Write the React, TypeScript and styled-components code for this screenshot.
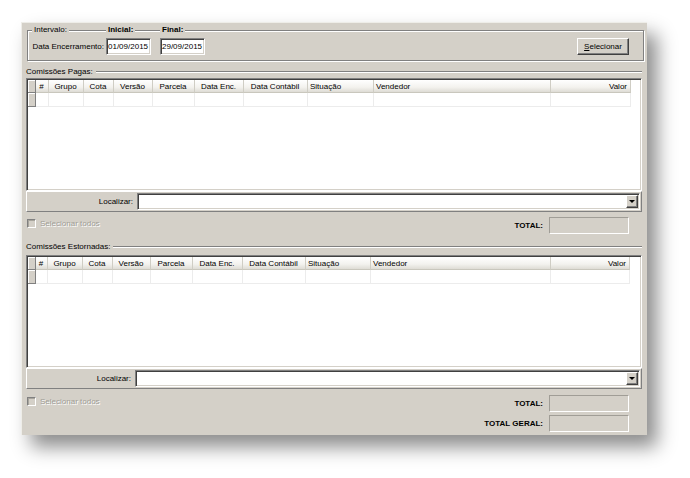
import { Fragment } from "react";
import styled, { createGlobalStyle } from "styled-components";

const GlobalStyle = createGlobalStyle`
  html, body {
    margin: 0;
    background: #fff;
  }
  body {
    font-family: "Liberation Sans", Arial, sans-serif;
    font-size: 8px;
    color: #000;
  }
`;

type Column = { label: string; w: number; align: "left" | "center" | "right" };

const paidColumns: Column[] = [
  { label: "#", w: 13, align: "center" },
  { label: "Grupo", w: 35, align: "center" },
  { label: "Cota", w: 30, align: "center" },
  { label: "Versão", w: 39, align: "center" },
  { label: "Parcela", w: 42, align: "center" },
  { label: "Data Enc.", w: 49, align: "center" },
  { label: "Data Contábil", w: 64, align: "center" },
  { label: "Situação", w: 66, align: "left" },
  { label: "Vendedor", w: 177, align: "left" },
  { label: "Valor", w: 80, align: "right" },
];

const reversedColumns: Column[] = [
  { label: "#", w: 12, align: "center" },
  { label: "Grupo", w: 35, align: "center" },
  { label: "Cota", w: 30, align: "center" },
  { label: "Versão", w: 38, align: "center" },
  { label: "Parcela", w: 42, align: "center" },
  { label: "Data Enc.", w: 50, align: "center" },
  { label: "Data Contábil", w: 63, align: "center" },
  { label: "Situação", w: 65, align: "left" },
  { label: "Vendedor", w: 180, align: "left" },
  { label: "Valor", w: 79, align: "right" },
];

const Page = styled.div`
  width: 690px;
  height: 478px;
  box-sizing: border-box;
  padding: 22px 0 0 21px;
`;

const Window = styled.div`
  width: 626px;
  height: 413px;
  box-sizing: border-box;
  padding: 0 5px;
  background: #d4d0c8;
  box-shadow: inset 1px 1px 0 #eeede8, 10px 12px 18px rgba(0, 0, 0, 0.45);
  display: flex;
  flex-direction: column;
`;

/* group box "Intervalo" */
const GroupBox = styled.div`
  margin: 8px -2px 0 1px;
  padding: 0 14px 5px 0;
  border: 1px solid #808080;
  box-shadow: inset 1px 1px 0 #fff, 1px 1px 0 #fff;
`;

const Caption = styled.div`
  display: flex;
  height: 10px;
  margin-top: -6px;
  padding-left: 4px;
`;

const CaptionSlot = styled.div<{ $w?: number }>`
  width: ${(p) => (p.$w ? `${p.$w}px` : "auto")};
  flex: none;
  display: flex;
`;

const CaptionText = styled.span<{ $bold?: boolean }>`
  background: #d4d0c8;
  padding: 0 2px;
  line-height: 10px;
  font-weight: ${(p) => (p.$bold ? 700 : 400)};
`;

const IntervalRow = styled.div`
  display: grid;
  grid-template-columns: 78px 54px 1fr auto;
  align-items: center;
  margin-top: 3px;
`;

const FieldLabel = styled.span`
  text-align: right;
  padding-right: 2px;
`;

const DateField = styled.input`
  width: 45px;
  height: 17px;
  box-sizing: border-box;
  margin: 0;
  padding: 0 0 0 1px;
  font: inherit;
  color: #000;
  background: #fff;
  border: 1px solid;
  border-color: #808080 #fff #fff #808080;
  box-shadow: inset 1px 1px 0 #404040, inset -1px -1px 0 #d4d0c8;
  outline: none;
`;

const Button = styled.button`
  width: 52px;
  height: 17px;
  margin: 0;
  padding: 0;
  font: inherit;
  color: #000;
  background: #d4d0c8;
  border: 1px solid;
  border-color: #fff #404040 #404040 #fff;
  box-shadow: inset -1px -1px 0 #808080;
`;

/* section with grid */
const SectionHeader = styled.div<{ $mt: number }>`
  display: flex;
  align-items: center;
  height: 10px;
  margin-top: ${(p) => p.$mt}px;
`;

const SectionTitle = styled.span`
  padding-right: 3px;
  line-height: 10px;
`;

const SectionLine = styled.div`
  flex: 1;
  height: 0;
  border-top: 1px solid #808080;
  border-bottom: 1px solid #fff;
`;

const Grid = styled.div<{ $mt: number }>`
  height: 113px;
  box-sizing: border-box;
  margin-top: ${(p) => p.$mt}px;
  padding: 1px;
  background: #fff;
  border: 1px solid;
  border-color: #808080 #fff #fff #808080;
  box-shadow: inset 1px 1px 0 #404040, inset -1px -1px 0 #d4d0c8;
`;

const GridRow = styled.div<{ $h: number }>`
  display: flex;
  height: ${(p) => p.$h}px;
`;

const Indicator = styled.div`
  width: 8px;
  flex: none;
  box-sizing: border-box;
  background: #d4d0c8;
  border-right: 1px solid #808080;
  border-bottom: 1px solid #808080;
  box-shadow: inset 1px 1px 0 #fff;
`;

const HeadCell = styled.div<{ $w: number; $align: string }>`
  width: ${(p) => p.$w}px;
  flex: none;
  box-sizing: border-box;
  padding: 0 3px 0 2px;
  line-height: 13px;
  text-align: ${(p) => p.$align};
  white-space: nowrap;
  overflow: hidden;
  background: linear-gradient(#ffffff, #f3f2ee 60%, #dedcd5);
  border-right: 1px solid #cfcdc4;
  border-bottom: 1px solid #c9c7bd;
`;

const DataCell = styled.div<{ $w: number }>`
  width: ${(p) => p.$w}px;
  flex: none;
  box-sizing: border-box;
  border-right: 1px solid #ececec;
  border-bottom: 1px solid #ececec;
`;

const FindBar = styled.div`
  display: flex;
  align-items: center;
  height: 21px;
  box-sizing: border-box;
  border: 1px solid;
  border-color: #fff #808080 #808080 #fff;
`;

const FindLabel = styled.span<{ $w: number }>`
  width: ${(p) => p.$w}px;
  flex: none;
  text-align: right;
`;

const Combo = styled.div`
  flex: 1;
  height: 17px;
  box-sizing: border-box;
  margin: 0 1px 0 4px;
  padding: 1px;
  display: flex;
  justify-content: flex-end;
  align-items: stretch;
  background: #fff;
  border: 1px solid;
  border-color: #808080 #fff #fff #808080;
  box-shadow: inset 1px 1px 0 #404040, inset -1px -1px 0 #d4d0c8;
`;

const DropButton = styled.div`
  width: 12px;
  box-sizing: border-box;
  display: flex;
  align-items: center;
  justify-content: center;
  background: #d4d0c8;
  border: 1px solid;
  border-color: #fff #404040 #404040 #fff;
  box-shadow: inset -1px -1px 0 #808080;

  &::after {
    content: "";
    border-left: 3px solid transparent;
    border-right: 3px solid transparent;
    border-top: 3px solid #000;
  }
`;

const FooterRow = styled.div<{ $mt: number }>`
  display: flex;
  justify-content: space-between;
  align-items: flex-start;
  margin-top: ${(p) => p.$mt}px;
`;

const CheckOption = styled.label`
  display: flex;
  align-items: center;
  gap: 4px;
  margin: 2px 0 0 1px;
  color: #a09d96;
  text-shadow: 1px 1px 0 #fff;
`;

const CheckBox = styled.span`
  width: 9px;
  height: 9px;
  box-sizing: border-box;
  background: #d4d0c8;
  border: 1px solid;
  border-color: #808080 #fff #fff #808080;
  box-shadow: inset 1px 1px 0 #a8a59d;
`;

const Totals = styled.div`
  display: grid;
  grid-template-columns: auto 80px;
  column-gap: 6px;
  row-gap: 3px;
  align-items: center;
  margin-right: 13px;
`;

const TotalLabel = styled.span`
  font-weight: 700;
  text-align: right;
`;

const TotalBox = styled.div`
  height: 17px;
  box-sizing: border-box;
  background: #d4d0c8;
  border: 1px solid;
  border-color: #a09d96 #fff #fff #a09d96;
`;

type SectionProps = {
  title: string;
  columns: Column[];
  headerMt: number;
  gridMt: number;
  findLabelW: number;
  footerMt: number;
  totals: string[];
};

const Section = ({ title, columns, headerMt, gridMt, findLabelW, footerMt, totals }: SectionProps) => (
  <>
    <SectionHeader $mt={headerMt}>
      <SectionTitle>{title}</SectionTitle>
      <SectionLine />
    </SectionHeader>
    <Grid $mt={gridMt}>
      <GridRow $h={13}>
        <Indicator />
        {columns.map((c) => (
          <HeadCell key={c.label} $w={c.w} $align={c.align}>
            {c.label}
          </HeadCell>
        ))}
      </GridRow>
      <GridRow $h={14}>
        <Indicator />
        {columns.map((c) => (
          <DataCell key={c.label} $w={c.w} />
        ))}
      </GridRow>
    </Grid>
    <FindBar>
      <FindLabel $w={findLabelW}>Localizar:</FindLabel>
      <Combo>
        <DropButton />
      </Combo>
    </FindBar>
    <FooterRow $mt={footerMt}>
      <CheckOption>
        <CheckBox />
        Selecionar todos
      </CheckOption>
      <Totals>
        {totals.map((t) => (
          <Fragment key={t}>
            <TotalLabel>{t}</TotalLabel>
            <TotalBox />
          </Fragment>
        ))}
      </Totals>
    </FooterRow>
  </>
);

const App = () => {
  return (
    <Page>
      <GlobalStyle />
      <Window>
        <GroupBox>
          <Caption>
            <CaptionSlot $w={74}>
              <CaptionText>Intervalo:</CaptionText>
            </CaptionSlot>
            <CaptionSlot $w={54}>
              <CaptionText $bold>Inicial:</CaptionText>
            </CaptionSlot>
            <CaptionSlot>
              <CaptionText $bold>Final:</CaptionText>
            </CaptionSlot>
          </Caption>
          <IntervalRow>
            <FieldLabel>Data Encerramento:</FieldLabel>
            <DateField readOnly value="01/09/2015" />
            <DateField readOnly value="29/09/2015" />
            <Button type="button">
              <u>S</u>elecionar
            </Button>
          </IntervalRow>
        </GroupBox>
        <Section
          title="Comissões Pagas:"
          columns={paidColumns}
          headerMt={6}
          gridMt={1}
          findLabelW={106}
          footerMt={5}
          totals={["TOTAL:"]}
        />
        <Section
          title="Comissões Estornadas:"
          columns={reversedColumns}
          headerMt={8}
          gridMt={3}
          findLabelW={104}
          footerMt={6}
          totals={["TOTAL:", "TOTAL GERAL:"]}
        />
      </Window>
    </Page>
  );
};

export default App;
